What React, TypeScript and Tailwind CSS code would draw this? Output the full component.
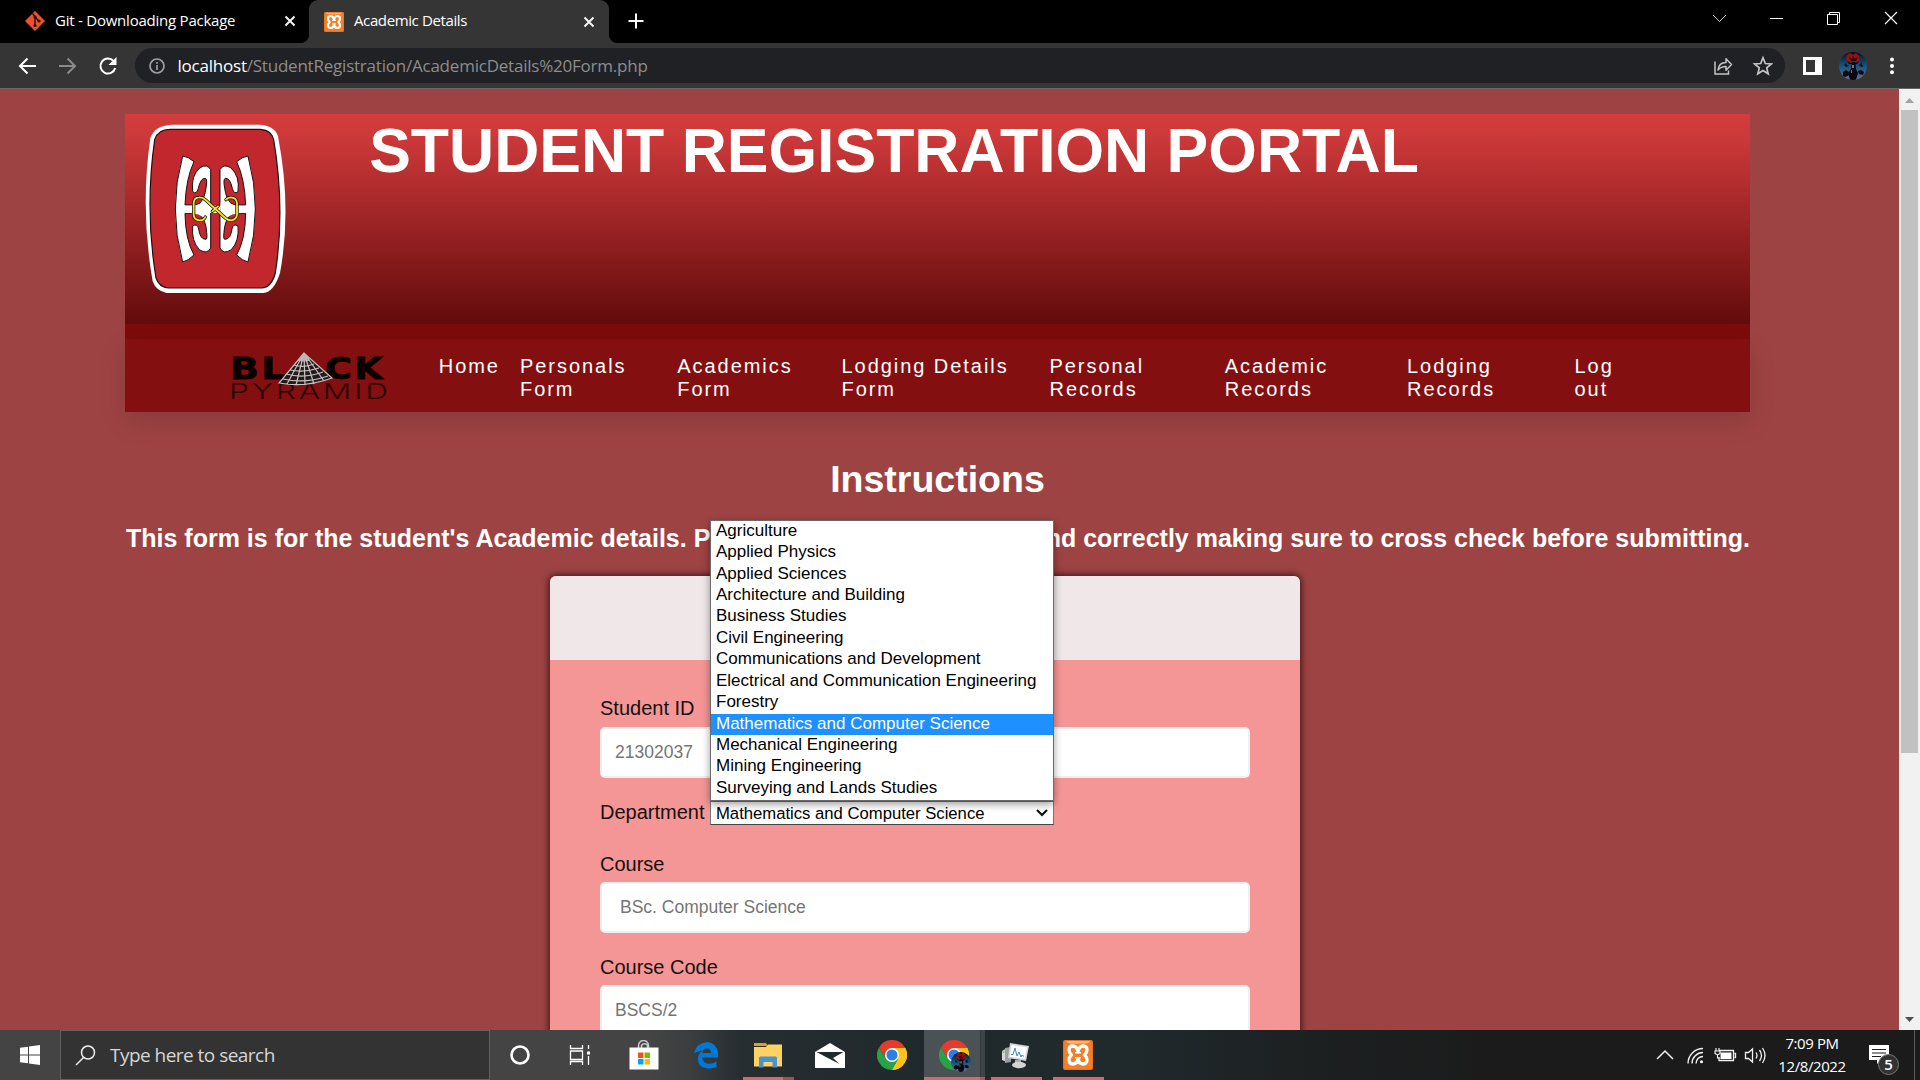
import React from "react";

const NAV = [
  ["Home", ""],
  ["Personals", "Form"],
  ["Academics", "Form"],
  ["Lodging Details", "Form"],
  ["Personal", "Records"],
  ["Academic", "Records"],
  ["Lodging", "Records"],
  ["Log", "out"],
];

const DEPARTMENTS = [
  "Agriculture",
  "Applied Physics",
  "Applied Sciences",
  "Architecture and Building",
  "Business Studies",
  "Civil Engineering",
  "Communications and Development",
  "Electrical and Communication Engineering",
  "Forestry",
  "Mathematics and Computer Science",
  "Mechanical Engineering",
  "Mining Engineering",
  "Surveying and Lands Studies",
];

const SELECTED = "Mathematics and Computer Science";

function XamppIcon({ w, h }: { w: number; h: number }) {
  return (
    <svg width={w} height={h} viewBox="0 0 30 30" preserveAspectRatio="none" className="shrink-0">
      <rect width="30" height="30" rx="2" fill="#e8701e" />
      <rect x="1" y="1" width="28" height="28" rx="1.5" fill="#f57f28" />
      <path d="M3 1h24q-1 2.500-5 2.500H8q-4 0-5-2.500z" fill="#fbb98a" />
      <path
        d="M15 11.500q-1.200-5.500-5.200-5.500Q6 6 6 10q0 2.800 2.500 5Q6 17.200 6 20q0 3.800 3.800 4 4 0 5.200-5 1.200 5 5.200 5 3.800-.2 3.800-4 0-2.800-2.500-5Q24 12.800 24 10q0-4-3.800-4-4 0-5.200 5.500z"
        fill="none"
        stroke="#fff"
        strokeWidth="3.300"
        strokeLinejoin="round"
      />
      <path d="M12 12.800h6M12 17.800h6" stroke="#fff" strokeWidth="1.600" />
    </svg>
  );
}

function CloseIcon() {
  return (
    <svg width="12" height="12" viewBox="0 0 12 12" className="shrink-0">
      <path d="M1.500 1.500l9 9M10.500 1.500l-9 9" stroke="#f5f5f5" strokeWidth="2" />
    </svg>
  );
}

function Portrait({ size }: { size: number }) {
  return (
    <svg width={size} height={size} viewBox="0 0 28 28">
      <defs>
        <linearGradient id={"sky" + size} x1="0" y1="0" x2="0" y2="1">
          <stop offset="0" stopColor="#071018" />
          <stop offset=".45" stopColor="#12507d" />
          <stop offset="1" stopColor="#68708a" />
        </linearGradient>
        <clipPath id={"disc" + size}>
          <circle cx="14" cy="14" r="14" />
        </clipPath>
      </defs>
      <g clipPath={"url(#disc" + size + ")"}>
        <rect width="28" height="28" fill={"url(#sky" + size + ")"} />
        <path d="M8 3l3-2 3 2 3-2 3 3 1 4-3 3-4-1-4 1-3-3z" fill="#a00d10" />
        <path d="M10 5l3 2 1-3 2 3 3-2-2 4h-5zM8 9l3 2h6l3-2-2 3h-8z" fill="#140407" />
        <path d="M12.500 10h4l.5 7 2 4-2 7h-6l-2-7 3-4z" fill="#0a0a10" />
        <path d="M4 20l3-2 3 2 .5 3-4.500 2-2-1zM19 19l3-1 3 2-1 3-4-1z" fill="#0a0d16" />
        <path d="M5 13l2-2 1 2 2 1-3 1zM20 13l3-3v3l2 1-3 1z" fill="#0b1320" />
        <path d="M13 13h2v3h-2zM12 18h1v3h-1z" fill="#777086" />
      </g>
    </svg>
  );
}

function ChromeIcon() {
  return (
    <svg width="30" height="30" viewBox="0 0 30 30">
      <path d="M15 15L2 7.500A15 15 0 0 1 28 7.500z" fill="#e53b2e" />
      <path d="M15 15h0L28 7.500A15 15 0 0 1 15 30l6.500-11.200z" fill="#fcc31b" />
      <path d="M15 8h13.200A15 15 0 0 1 15 30l6.200-11.400z" fill="#fcc31b" />
      <path d="M2 7.500L8.800 18.500 15 8z" fill="#e53b2e" />
      <path d="M2 7.500A15 15 0 0 0 15 30l6-11-12.200-.5z" fill="#28a148" />
      <circle cx="15" cy="15" r="7" fill="#fff" />
      <circle cx="15" cy="15" r="5.500" fill="#2f7de9" />
    </svg>
  );
}

function TabStrip() {
  return (
    <div className="flex h-[43px] bg-black text-[15px] text-white">
      <div className="flex h-[42px] w-[309px] items-center pl-[25px]">
        <svg width="20" height="20" viewBox="0 0 20 20" className="shrink-0">
          <path d="M10 0l10 10-10 10L0 10z" fill="#f1502f" />
          <path d="M7.500 2.500l2.500 3v9M10 6l4 4.200" stroke="#241210" strokeWidth="1.400" fill="none" />
          <circle cx="10" cy="6" r="1.600" fill="#241210" />
          <circle cx="14" cy="10" r="1.600" fill="#241210" />
          <circle cx="10" cy="14.500" r="1.600" fill="#241210" />
        </svg>
        <span className="ml-[10px] w-[229px] whitespace-nowrap pb-[2px] tracking-[-0.23px]">Git - Downloading Package</span>
        <CloseIcon />
      </div>
      <div className="relative flex h-[43px] w-[300px] items-center rounded-t-[9px] bg-[#353535] pl-[15px]">
        <span className="absolute bottom-0 -left-[9px] size-[9px] bg-[radial-gradient(circle_at_0_0,transparent_9px,#353535_9.500px)]" />
        <span className="absolute -right-[9px] bottom-0 size-[9px] bg-[radial-gradient(circle_at_100%_0,transparent_9px,#353535_9.500px)]" />
        <XamppIcon w={20} h={20} />
        <span className="ml-[10px] w-[228.500px] whitespace-nowrap pb-[2px] tracking-[-0.38px]">Academic Details</span>
        <CloseIcon />
      </div>
      <div className="flex h-[42px] w-[54px] items-center justify-center">
        <svg width="16" height="16" viewBox="0 0 16 16">
          <path d="M8 .5v15M.5 8h15" stroke="#fff" strokeWidth="2" />
        </svg>
      </div>
      <div className="ml-auto flex h-[36px] items-center">
        <svg width="57" height="16" viewBox="0 0 57 16">
          <path d="M21 5l6.500 6.500L34 5" stroke="#ccc" strokeWidth="1" fill="none" />
        </svg>
        <svg width="57" height="16" viewBox="0 0 57 16">
          <path d="M21 8.500h13" stroke="#fff" strokeWidth="1" />
        </svg>
        <svg width="57" height="16" viewBox="0 0 57 16">
          <path d="M21.500 4.500h10v10h-10zM23.500 4.500v-2h10v10h-2" stroke="#fff" strokeWidth="1" fill="none" />
        </svg>
        <svg width="57" height="16" viewBox="0 0 57 16">
          <path d="M22 2l12 12M34 2l-12 12" stroke="#fff" strokeWidth="1.200" />
        </svg>
      </div>
    </div>
  );
}

function Toolbar() {
  return (
    <div className="flex h-[46px] items-center border-b border-[#6a6666] bg-[#353535]">
      <svg width="135" height="24" viewBox="0 0 135 24" fill="none" strokeWidth="2" className="shrink-0">
        <path d="M36 12H20M27.500 4.500L20 12l7.500 7.500" stroke="#fff" />
        <path d="M59 12h16M67.500 4.500L75 12l-7.500 7.500" stroke="#8b8b8b" />
        <path d="M113.500 7a7.500 7.500 0 1 0 1.700 7" stroke="#fff" />
        <path d="M116.500 3v8h-8z" fill="#fff" />
      </svg>
      <div className="flex h-[35px] w-[1650px] items-center rounded-full bg-[#202124] pl-[14px]">
        <svg width="16" height="16" viewBox="0 0 16 16" className="shrink-0">
          <circle cx="8" cy="8" r="7" fill="none" stroke="#9aa0a6" strokeWidth="1.700" />
          <path d="M8 7v5M8 4v1.700" stroke="#9aa0a6" strokeWidth="1.700" />
        </svg>
        <span className="ml-[12.500px] whitespace-nowrap text-[17px] tracking-[-0.22px] text-[#8d8d8d]">
          <span className="text-white">localhost</span>/StudentRegistration/AcademicDetails%20Form.php
        </span>
        <svg width="60" height="22" viewBox="0 0 60 22" fill="none" stroke="#c4c4c4" strokeWidth="1.500" className="ml-auto mr-[12.500px]">
          <path d="M2 6.500v12.500h13.500v-3.500" />
          <path d="M5 15c.5-5 3.500-7.500 8-7.500V3.800l5.500 5.700-5.500 5.700v-3.800c-3.500 0-6 1-8 3.600z" strokeLinejoin="round" />
          <path d="M50 2.800l2.300 5.700 6.100.4-4.700 4 1.500 5.900L50 15.500l-5.200 3.300 1.500-5.900-4.700-4 6.100-.4z" strokeWidth="1.700" />
        </svg>
      </div>
      <svg width="19" height="18" viewBox="0 0 19 18" className="ml-[18px]">
        <path d="M0 0h19v18H0z" fill="#fff" />
        <path d="M3 3h9v12H3z" fill="#353535" />
      </svg>
      <div className="ml-[17px]">
        <Portrait size={28} />
      </div>
      <svg width="6" height="18" viewBox="0 0 6 18" fill="#fff" className="ml-[22px]">
        <circle cx="3" cy="2.500" r="2" />
        <circle cx="3" cy="9" r="2" />
        <circle cx="3" cy="15.300" r="2" />
      </svg>
    </div>
  );
}

function CrestHalf() {
  return (
    <path
      d="M188 169Q144 328 188 487Q205 483 222 466Q196 420 195 341L214 341Q228 337 240 346Q258 362 260 398Q263 421 256 419Q240 418 236 388Q232 370 218 379Q214 425 238 450Q262 466 272 445L272 210Q262 191 240 204Q212 228 218 276Q230 286 235 266Q242 234 256 236Q263 238 258 265Q254 296 240 310Q228 319 214 316L195 316Q198 236 222 186Q205 171 188 169z"
      fill="#fff"
      stroke="#141010"
      strokeWidth="3"
    />
  );
}

function Crest() {
  const knot =
    "M256 352Q252 362 240 362Q221 360 221 345V310Q222 294 237 293Q248 292 257 301L316 355Q323 362 334 362Q350 359 351 345V310Q349 294 333 293Q324 293 318 300M277 335L294 320";
  return (
    <svg width="141.670" height="171.670" viewBox="75 70 425 515" className="shrink-0">
      <path d="M155 75.500H418Q464 78 474 110Q516 328 480 520Q462 577 430 580H140Q108 574 98 545Q60 330 91 115Q104 78 155 75.500z" fill="#fff" />
      <path d="M150 89H422Q455 92 461 120Q496 328 466 520Q455 563 425 565H145Q117 562 108 535Q74 330 104 120Q113 89 150 89z" fill="#c1272d" stroke="#1a1010" strokeWidth="3.500" />
      <CrestHalf />
      <g transform="translate(572 0) scale(-1 1)">
        <CrestHalf />
      </g>
      <path d="M190 318h26v21h-26zM356 318h26v21h-26zM268 318h36v22h-36zM216 318q20 0 30-10h24v42h-26q-12-10-28-6zM356 318q-20 0-30-10h-24v42h26q12-10 28-6z" fill="#fff" />
      <g fill="none" strokeLinecap="round">
        <path d={knot} stroke="#111" strokeWidth="10" />
        <path d={knot} stroke="#f4e61c" strokeWidth="5.500" />
      </g>
    </svg>
  );
}

function PyramidLogo() {
  return (
    <svg width="162" height="50" viewBox="0 0 162 50" className="shrink-0 overflow-visible">
      <g fontFamily="DejaVu Sans, sans-serif">
        <text x="-1" y="27" fontSize="30" fontWeight="700" fill="#0a0000" stroke="#0a0000" strokeWidth=".8" textLength="58" lengthAdjust="spacingAndGlyphs">BL</text>
        <text x="94" y="27" fontSize="30" fontWeight="700" fill="#0a0000" stroke="#0a0000" strokeWidth=".8" textLength="60" lengthAdjust="spacingAndGlyphs">CK</text>
        <text x="-2" y="46.500" fontSize="22" fontWeight="300" fill="#2a0203" fontFamily="Inter, sans-serif" textLength="162" lengthAdjust="spacingAndGlyphs">PYRAMID</text>
      </g>
      <path d="M73 1L48 31Q74 36 101 26z" fill="#241c1c" />
      <g stroke="#c9c2c2" strokeWidth="1.200" fill="none">
        <path d="M73 1L48 31Q74 36 101 26zM73 1L56 32M73 1L65 33M73 1L74 33M73 1L83 32M73 1L93 29" />
        <path d="M67 8q6 2 12 0M63 13q10 3 20-1M59 18q14 3 29-2M55 22q18 5 37-2M52 27q22 5 45-3" />
      </g>
      <path d="M67 8L73 1l6 6q-6 3-12 1z" fill="#bdb5b5" />
    </svg>
  );
}

function Banner() {
  return (
    <div className="relative">
      <div className="flex h-[210px] bg-[linear-gradient(#d43c3d,#ce393a_10%,#620b0c)] pt-[9px] pl-[20px]">
        <Crest />
        <h1 className="-mt-[9px] ml-[82.500px] whitespace-nowrap text-[62.500px] leading-[72px] font-bold text-white">STUDENT REGISTRATION PORTAL</h1>
      </div>
      <div className="h-[15px] bg-[#7d0b0b]" />
      <nav className="flex h-[73px] bg-[#840f10] pl-[105px] text-[20px] leading-[23px] tracking-[1.950px] text-white shadow-[0_10px_28px_rgba(0,0,0,0.12)]">
        <div className="mt-[13px] w-[208.750px] shrink-0">
          <div className="ml-px">
            <PyramidLogo />
          </div>
        </div>
        <ul className="grid grid-cols-[81.250px_157.250px_164.250px_208px_175.250px_182.250px_167.500px_80px] whitespace-nowrap pt-[16px]">
          {NAV.map(([a, b]) => (
            <li key={a + b}>
              {a}
              <br />
              {b}
            </li>
          ))}
        </ul>
      </nav>
    </div>
  );
}

function Field({ label, value, indent, low }: { label: string; value: string; indent?: boolean; low?: boolean }) {
  return (
    <div>
      <div className={"h-[30px] text-[20px] leading-[23px] text-[#151010] " + (low ? "pt-px" : "")}>{label}</div>
      <div
        className={
          "flex h-[51px] items-center rounded-[5px] border-2 border-[#f0eef0] bg-white pb-px text-[17.500px] text-[#757575] " +
          (indent ? "pl-[18px]" : "pl-[13px]")
        }
      >
        {value}
      </div>
    </div>
  );
}

function DepartmentSelect() {
  return (
    <div className="relative h-[24px] w-[344px] border border-[#767676] border-b-[#444] bg-white">
      <div className="flex h-full items-center justify-between pl-[5px] pr-[5px] text-[16.670px] text-black">
        <span className="whitespace-nowrap">{SELECTED}</span>
        <svg width="12" height="8" viewBox="0 0 12 8">
          <path d="M1 1l5 5 5-5" stroke="#111" strokeWidth="2.200" fill="none" />
        </svg>
      </div>
      <ul className="absolute bottom-[23px] -left-px flex h-[281px] w-[344px] flex-col border border-[#6a6a6a] bg-white pb-[0.500px] text-[17px] text-black shadow-[0_3px_8px_rgba(0,0,0,0.4)]">
        {DEPARTMENTS.map((d) => (
          <li
            key={d}
            className={
              "flex flex-1 items-center whitespace-nowrap pb-[2px] pl-[5px] leading-[18px] " +
              (d === SELECTED ? "bg-[#1e90ff] text-white" : "")
            }
          >
            {d}
          </li>
        ))}
      </ul>
    </div>
  );
}

function Page() {
  return (
    <div className="flex h-[941px] overflow-hidden bg-[#9e4343] font-['Liberation_Sans',sans-serif]">
      <main className="w-[1899px] pt-[25px] pl-[125px]">
        <div className="w-[1625px]">
          <Banner />
          <h2 className="mt-[46px] text-center text-[37.500px] leading-[43px] font-bold text-white">Instructions</h2>
          <div className="mt-[23px] flex h-[29px] justify-between whitespace-nowrap pl-px text-[25px] leading-[29px] font-bold text-white">
            <span>This form is for the student&apos;s Academic details. P</span>
            <span>nd correctly making sure to cross check before submitting.</span>
          </div>
          <section className="mt-[23px] ml-[425px] h-[600px] w-[750px] rounded-[6px] bg-[#f59696] shadow-[0_0_7px_1px_rgba(20,0,0,0.75)]">
            <div className="h-[84px] rounded-t-[6px] bg-[#f0e8e8]" />
            <div className="px-[50px] pt-[37px]">
              <Field label="Student ID" value="21302037" />
              <div className="mt-[22px] flex h-[56px] items-start">
                <span className="mt-px w-[110px] whitespace-nowrap text-[20px] leading-[23px] text-[#151010]">Department</span>
                <div className="mt-px">
                  <DepartmentSelect />
                </div>
              </div>
              <div className="-mt-[4px]">
                <Field label="Course" value="BSc. Computer Science" indent low />
              </div>
              <div className="mt-[22px]">
                <Field label="Course Code" value="BSCS/2" low />
              </div>
            </div>
          </section>
        </div>
      </main>
      <div className="flex w-[21px] flex-col items-center bg-[#f1f1f1]">
        <svg width="9" height="21" viewBox="0 0 9 21">
          <path d="M0 14l4.500-5L9 14z" fill="#a3a3a3" />
        </svg>
        <div className="h-[643px] w-[17px] bg-[#c1c1c1]" />
        <svg width="9" height="21" viewBox="0 0 9 21" className="mt-auto">
          <path d="M0 8h9l-4.500 5z" fill="#505050" />
        </svg>
      </div>
    </div>
  );
}

function Slot({ children, tile, bar }: { children: React.ReactNode; tile?: boolean; bar?: "single" | "grouped" | "active" }) {
  return (
    <div className={"relative flex h-[50px] w-[62px] items-center justify-center " + (tile ? "bg-[linear-gradient(90deg,transparent_1px,#4b5256_1px,#4b5256_57px,#2a3033_57px,#3d4447_58px)]" : "")}>
      {children}
      {bar === "single" && <span className="absolute bottom-0 left-[6px] h-[3px] w-[51px] bg-[#e06466]" />}
      {bar === "grouped" && (
        <span className="absolute bottom-0 left-[6px] flex h-[3px] w-[51px] bg-[#a94d50]">
          <span className="w-[40px] bg-[#e06466]" />
        </span>
      )}
      {bar === "active" && (
        <span className="absolute bottom-0 left-px flex h-[3px] w-[61px] bg-[#b85457]">
          <span className="w-[56px] bg-[#e06466]" />
        </span>
      )}
    </div>
  );
}

function Taskbar() {
  return (
    <div className="flex h-[50px] bg-[linear-gradient(90deg,#444_0,#444_650px,#3b3e3f_690px,#272e31_740px,#20292c_900px,#20292c_1130px,#1c1f20_1330px,#1b1b1b_1500px)] text-white">
      <div className="flex w-[60px] items-center justify-center">
        <svg width="20" height="20" viewBox="0 0 20 20" fill="#fff">
          <path d="M0 2.800L8 1.700v7.800H0zM9 1.500L20 0v9.500H9zM0 10.500h8v7.800l-8-1.100zM9 10.500h11V20L9 18.500z" />
        </svg>
      </div>
      <div className="flex w-[430px] items-center border border-[#606060] bg-[#333] pl-[14px]">
        <svg width="21" height="21" viewBox="0 0 21 21" fill="none" stroke="#f0f0f0" strokeWidth="1.500">
          <circle cx="13" cy="7.500" r="6.500" />
          <path d="M8.500 12.500L1 20" />
        </svg>
        <span className="ml-[14px] text-[19px] tracking-[-0.53px] text-[#d6d6d6]">Type here to search</span>
      </div>
      <div className="-ml-px flex">
        <Slot>
          <svg width="20" height="20" viewBox="0 0 20 20">
            <circle cx="10" cy="10" r="8.500" fill="none" stroke="#fff" strokeWidth="2.600" />
          </svg>
        </Slot>
        <Slot>
          <svg width="24" height="20" viewBox="0 0 24 20" fill="none" stroke="#fff" strokeWidth="1.300" className="-ml-[4px]">
            <path d="M2.500 0v3.500h12V0M2.500 6h12v8.500h-12zM2.500 20v-3.500h12V20M20.500 0v4M20.500 11v9" />
            <path d="M19 6.500h3v3h-3z" fill="#fff" stroke="none" />
          </svg>
        </Slot>
        <Slot>
          <svg width="30" height="30" viewBox="0 0 30 30">
            <path d="M9.500 8V5.500a5 5 0 0 1 10 0V8M12.500 8V5.500a3.500 3.500 0 0 1 6 0V8" fill="none" stroke="#c9c9c9" strokeWidth="1.500" />
            <path d="M.5 7.500h29V29.500H.5z" fill="#fff" />
            <path d="M9 12.500h5.500V18H9z" fill="#f25022" />
            <path d="M15.500 12.500H21V18h-5.500z" fill="#7fba00" />
            <path d="M9 19h5.500v5.500H9z" fill="#00a4ef" />
            <path d="M15.500 19H21v5.500h-5.500z" fill="#ffb900" />
          </svg>
        </Slot>
        <Slot>
          <svg width="24" height="27" viewBox="0 0 24 27">
            <path d="M0 12Q2 1 13 0q10 1 11 11v4.500H8q1 6 7 6.300 4 0 7.500-2.300v5Q19 27 13.500 26.500 4 25.500 3.800 17 4 11 9 8.500 3 8.500 0 12zm8.300-1H17q0-4.500-4.200-4.800Q9 6.500 8.300 11z" fill="#0078d7" />
          </svg>
        </Slot>
        <Slot bar="grouped">
          <svg width="28" height="25" viewBox="0 0 28 25">
            <path d="M0 0h12l2 3H0z" fill="#e0a010" />
            <path d="M0 4h12l2-2.500h14V23.500H0z" fill="#ffd262" />
            <path d="M5 24.500V15q0-1.500 1.500-1.500h15q1.500 0 1.500 1.500v9.500h-4.500v-5.500h-9v5.500z" fill="#4694d2" />
          </svg>
        </Slot>
        <Slot>
          <svg width="30" height="25" viewBox="0 0 30 25">
            <path d="M0 9L15 0l15 9v16H0z" fill="#fff" />
            <path d="M1.500 9h27l-10.500 6 6.500 6L10 13.500z" fill="#20292c" />
          </svg>
        </Slot>
        <Slot>
          <ChromeIcon />
        </Slot>
        <Slot tile bar="active">
          <div className="relative size-[30px]">
            <ChromeIcon />
            <div className="absolute top-[12px] left-[12px]">
              <Portrait size={20} />
            </div>
          </div>
        </Slot>
        <Slot bar="single">
          <svg width="29" height="27" viewBox="0 0 29 27" className="-ml-[2px]">
            <path d="M1 9l5-3v14l-5-2z" fill="#d5d8da" />
            <path d="M4 6l6-1v15l-6 1z" fill="#9b9fa2" />
            <path d="M9 1l19 3-3 15L7 16z" fill="#d3d6d8" />
            <path d="M10.500 3l15.500 2.500-2.300 11.500-15-2.200z" fill="#fbfdff" />
            <path d="M10 12.500l2 0 2-6.500 2 8 2-4 2 5 1-2 2 1.500" stroke="#3b87c8" strokeWidth="1" fill="none" />
            <path d="M14 18h6v3h-6z" fill="#aaa" />
            <ellipse cx="18" cy="23" rx="7" ry="3.200" fill="#d4d4d4" />
            <circle cx="2.500" cy="10" r="1" fill="#5bd43a" />
          </svg>
        </Slot>
        <Slot bar="single">
          <XamppIcon w={30} h={30} />
        </Slot>
      </div>
      <div className="ml-auto flex items-center">
        <svg width="110" height="24" viewBox="0 0 110 24" fill="none" stroke="#f2f2f2" strokeWidth="1.500" className="shrink-0">
          <path d="M1 16l8-8 8 8" />
          <g strokeWidth="1.400">
            <path d="M32 20.500A15 15 0 0 1 47 5.500M36 20.500A11 11 0 0 1 47 9.500M40 20.500a7 7 0 0 1 7-7" />
            <circle cx="45.500" cy="18.800" r="1.500" fill="#fff" stroke="none" />
          </g>
          <g transform="translate(-1 0)">
            <path d="M64 7.500h14.500v10H64V14M79.500 10.500h1v4h-1" strokeWidth="1.300" />
            <path d="M65.500 9.500h11v6.500h-11z" fill="#fff" stroke="none" />
            <path d="M61 5v3M64 5v3M60 8h5v2.500q-2.500 2-5 0zM62.500 11v4h2" strokeWidth="1.200" />
          </g>
          <path d="M89.500 9.500h3l4-3.500v13l-4-3.500h-3zM100 9.500q2 3 0 6M103.500 7q4 5.500 0 11M106.500 5q5 7.500 0 15" strokeWidth="1.300" />
        </svg>
        <div className="ml-[8px] w-[76px] text-center text-[15px] leading-[23px] tracking-[-0.42px]">
          <div>7:09 PM</div>
          <div>12/8/2022</div>
        </div>
        <svg width="46" height="40" viewBox="0 0 46 40" className="ml-[18px] shrink-0">
          <path d="M1 10h20v15h-8l-4 4v-4H1z" fill="#fff" />
          <path d="M4 14.500h14M4 18h14M4 21.500h9" stroke="#1b1b1b" strokeWidth="1.200" />
          <circle cx="20.500" cy="29.500" r="10" fill="#333" stroke="#777" strokeWidth="1" />
          <text x="20.500" y="35" textAnchor="middle" fontSize="15" fontWeight="600" fill="#fff">5</text>
        </svg>
        <div className="h-full w-[6px] border-l border-[#5c5c5c]" />
      </div>
    </div>
  );
}

export default function App() {
  return (
    <div className="h-[1080px] w-[1920px] overflow-hidden font-['Open_Sans',sans-serif]">
      <TabStrip />
      <Toolbar />
      <Page />
      <Taskbar />
    </div>
  );
}
